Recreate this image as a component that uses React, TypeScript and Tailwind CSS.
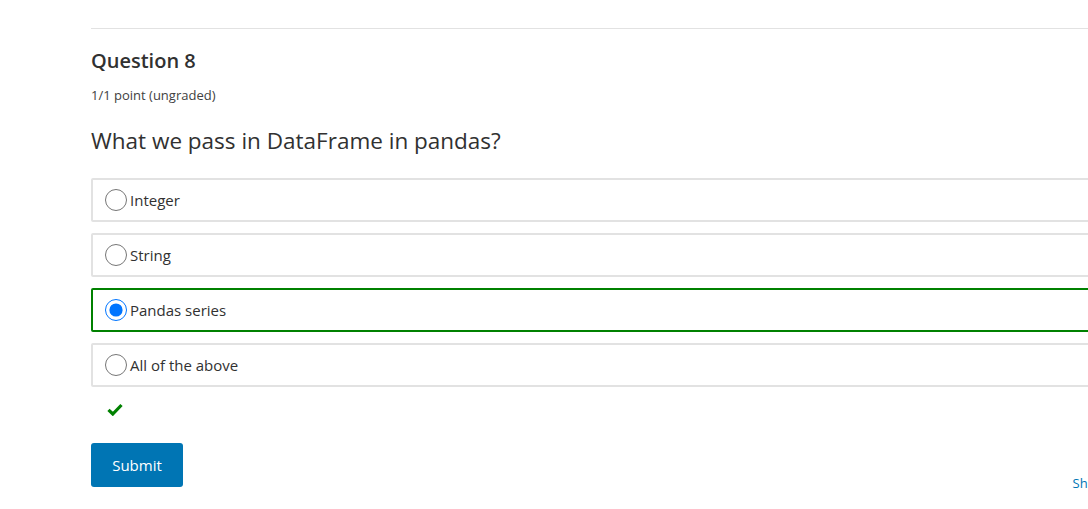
import React from "react";

const options = [
  { id: "a", label: "Integer" },
  { id: "b", label: "String" },
  { id: "c", label: "Pandas series" },
  { id: "d", label: "All of the above" },
];

const App: React.FC = () => {
  const selected = "c";

  return (
    <div
      className="w-[1088px] h-[509px] overflow-hidden bg-white text-[#313131]"
      style={{ fontFamily: '"Open Sans", "Segoe UI", sans-serif' }}
    >
      <div className="pl-[91px] pt-[28px]">
        <div className="w-[1062px]">
          <div className="border-t border-[#e2e2e2]" />

          <h3 className="mt-[18px] text-[20px] font-semibold leading-[28px] text-[#313131]">
            Question 8
          </h3>
          <p className="mt-[12px] text-[13px] leading-[17px] text-[#414141]">
            1/1 point (ungraded)
          </p>

          <p className="mt-[22px] text-[22.5px] leading-[30px] text-[#313131]">
            What we pass in DataFrame in pandas?
          </p>

          {/* Options */}
          <div className="mt-[22px] flex flex-col gap-[11px]">
            {options.map((opt) => {
              const isSel = opt.id === selected;
              return (
                <label
                  key={opt.id}
                  className={
                    isSel
                      ? "flex h-[44px] items-center rounded-[2px] border-2 border-[#008100] pl-[12px]"
                      : "flex h-[44px] items-center rounded-[2px] border-2 border-[#e2e2e2] pl-[12px]"
                  }
                >
                  <input
                    type="radio"
                    name="q8"
                    defaultChecked={isSel}
                    className="m-0 h-[22px] w-[22px] accent-[#0075ff]"
                  />
                  <span className="ml-[3px] text-[15px] text-[#313131]">
                    {opt.label}
                  </span>
                </label>
              );
            })}
          </div>

          {/* Correct mark */}
          <div className="mt-[16px] pl-[16px] h-[14px]">
            <svg width="16" height="13" viewBox="0 0 16 13">
              <path
                d="M1.5 6.8 L5.8 11 L14.5 2"
                fill="none"
                stroke="#008100"
                strokeWidth="3.2"
              />
            </svg>
          </div>

          <div className="mt-[26px] flex items-end justify-between">
            <button className="h-[44px] w-[92px] rounded-[3px] bg-[#0075b4] text-[15px] text-white">
              Submit
            </button>
            <a className="mb-[-6px] text-[13px] text-[#0075b4]">Show answer</a>
          </div>
        </div>
      </div>
    </div>
  );
};

export default App;
